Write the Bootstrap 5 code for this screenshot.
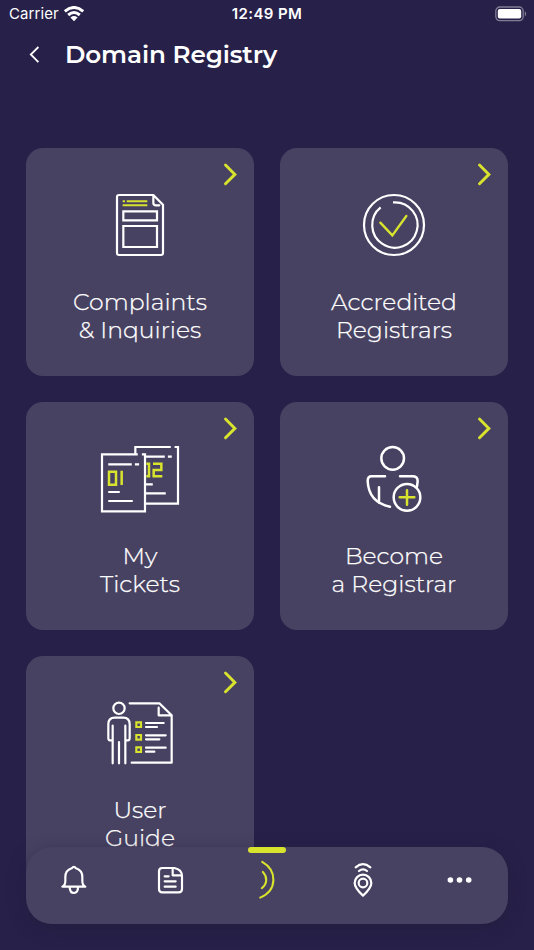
<!DOCTYPE html>
<html lang="en">
<head>
<meta charset="utf-8">
<meta name="viewport" content="width=device-width, initial-scale=1">
<title>Domain Registry</title>
<link href="https://cdn.jsdelivr.net/npm/bootstrap@5.3.0/dist/css/bootstrap.min.css" rel="stylesheet">
<style>
:root{--lime:#d8e32e;--panel:#484262}
body{background:#272049;font-family:Montserrat,Inter,sans-serif;height:950px}
svg{display:block;flex:none;fill:none}
.status-bar{height:28px;padding:0 7px 0 9px;font:15px/28px Inter,sans-serif}
.status-bar>*{flex:1 1 0}
.clock{font-weight:600;letter-spacing:.4px;padding-right:2px}
.carrier{letter-spacing:.1px}
.page-head{height:53px;padding-left:27px}
.page-head h1{font-size:24.7px;line-height:53px;font-weight:600;letter-spacing:-.1px;margin-left:23px}
.tiles{display:grid;grid-template-columns:228px 228px;gap:26px;padding:66.5px 26px 0}
.tile{height:228px;border-radius:17px;background:var(--panel);padding-top:32px;color:#fff}
.tile:hover{color:#fff}
.tile-label{margin-top:18.5px;font-size:23.5px;line-height:28px;font-weight:300;-webkit-text-stroke:.25px #fff}
.tile-label span{display:block}
.chev{position:absolute;top:14.5px;right:16px}
.w{stroke:#fff;stroke-width:6.6;stroke-linecap:round;stroke-linejoin:round}
.y{stroke:var(--lime);stroke-width:6;stroke-linejoin:miter}
.tabs{left:26px;right:26px;bottom:26.5px;height:77px;border-radius:26px;background:var(--panel);box-shadow:0 4px 16px rgba(33,27,55,.5)}
.tabs a{flex:1 1 0;height:67px}
.tab-mark{position:absolute;top:0;left:222px;width:38px;height:6px;border-radius:3px;background:var(--lime)}
.ti{stroke-width:6.5}
</style>
</head>
<body class="overflow-hidden text-white position-relative">
<div class="status-bar d-flex align-items-center">
  <div class="d-flex align-items-center carrier">Carrier
    <svg class="ms-1" width="22" height="16" viewBox="0 0 22 16"><g stroke="#fff" stroke-width="3"><path d="M1.8 5.4Q11-2.4 20.2 5.4"/><path d="M5.2 9Q11 4 16.8 9"/></g><path fill="#fff" d="M7.4 11.5Q11 8.6 14.6 11.5L11 15.2Z"/></svg>
  </div>
  <div class="clock text-center">12:49 PM</div>
  <div class="d-flex justify-content-end">
    <svg width="32" height="16" viewBox="0 0 32 16"><rect x=".8" y="1" width="27.4" height="13.6" rx="4" stroke="#817d95" stroke-width="1.3"/><rect x="2.8" y="3" width="23.4" height="9.6" rx="2" fill="#fff"/><path d="M29.8 5.2Q31.2 6 31.2 7.8T29.8 10.4Z" fill="#817d95"/></svg>
  </div>
</div>
<header class="page-head d-flex align-items-center">
  <a href="#" aria-label="Back"><svg width="15" height="20" viewBox="0 0 15 20"><path d="M11.4 2L3.8 9.5l7.6 7.6" stroke="#fff" stroke-width="1.8"/></svg></a>
  <h1 class="mb-0">Domain Registry</h1>
</header>
<main class="tiles">
  <a href="#" class="tile position-relative d-flex flex-column align-items-center text-decoration-none text-center">
    <svg class="chev" width="16" height="24" viewBox="0 0 16 24"><path d="M3.5 3L12.9 12.4 3.5 21.8" stroke="#d8e32e" stroke-width="2.9" stroke-linecap="round"/></svg>
    <svg width="100" height="90" viewBox="0 0 300 270"><path class="w" d="M87 45H190L219 74V219Q219 225 213 225H87Q81 225 81 219V51Q81 45 87 45ZM190 45V68Q190 76 198 76H208"/><path class="w" style="stroke-linejoin:miter" d="M100 94H201V121H100ZM100 138H201V201H100Z"/><path class="y" d="M98 64H105M110 64H172M98 76H172"/></svg>
    <div class="tile-label"><span>Complaints</span><span>&amp; Inquiries</span></div>
  </a>
  <a href="#" class="tile position-relative d-flex flex-column align-items-center text-decoration-none text-center">
    <svg class="chev" width="16" height="24" viewBox="0 0 16 24"><path d="M3.5 3L12.9 12.4 3.5 21.8" stroke="#d8e32e" stroke-width="2.9" stroke-linecap="round"/></svg>
    <svg width="100" height="90" viewBox="-18 90 300 270"><circle class="w" cx="132" cy="225" r="90"/><path class="w" style="stroke-linecap:butt" d="M129 157H132A68 68 0 1 1 92 172"/><path class="y" style="stroke-linecap:round;stroke-width:7" d="M91 218L127 256 169 198"/></svg>
    <div class="tile-label"><span>Accredited</span><span>Registrars</span></div>
  </a>
  <a href="#" class="tile position-relative d-flex flex-column align-items-center text-decoration-none text-center">
    <svg class="chev" width="16" height="24" viewBox="0 0 16 24"><path d="M3.5 3L12.9 12.4 3.5 21.8" stroke="#d8e32e" stroke-width="2.9" stroke-linecap="round"/></svg>
    <svg width="100" height="90" viewBox="0 -3 300 270"><path class="w" style="stroke-linecap:square;stroke-linejoin:miter" d="M136 56V36H239M257 36H264V206H168M168 65H221M237 65H242M168 148H185M168 175H224M140 58H36V229H165V58H159M58 88H122M138 88H144M58 171H86M58 198H125"/><path class="y" style="stroke-width:7.5" d="M57 110H78V149H57ZM95 107V150M169 86H177V124H169M189 86H214V105H191V124H217"/></svg>
    <div class="tile-label"><span>My</span><span>Tickets</span></div>
  </a>
  <a href="#" class="tile position-relative d-flex flex-column align-items-center text-decoration-none text-center">
    <svg class="chev" width="16" height="24" viewBox="0 0 16 24"><path d="M3.5 3L12.9 12.4 3.5 21.8" stroke="#d8e32e" stroke-width="2.9" stroke-linecap="round"/></svg>
    <svg width="100" height="90" viewBox="-18 -3 300 270"><g class="w" style="stroke-width:7.5"><circle cx="128" cy="70" r="34"/><path d="M105 124H65Q53 124 53 138Q56 202 120 215M87 157V203M150 124H187Q203 124 203 138L201 155"/><circle cx="171" cy="187" r="40"/></g><path class="y" style="stroke-width:7.5;stroke-linecap:round" d="M171 166V209M149 187H193"/></svg>
    <div class="tile-label"><span>Become</span><span>a Registrar</span></div>
  </a>
  <a href="#" class="tile position-relative d-flex flex-column align-items-center text-decoration-none text-center">
    <svg class="chev" width="16" height="24" viewBox="0 0 16 24"><path d="M3.5 3L12.9 12.4 3.5 21.8" stroke="#d8e32e" stroke-width="2.9" stroke-linecap="round"/></svg>
    <svg width="100" height="90" viewBox="0 -6 300 270"><circle class="w" cx="87" cy="55" r="17"/><path class="w" d="M68 220V107M68 151H60Q55 151 55 144V103Q55 83 74 83H100Q119 83 119 103V144Q119 151 114 151H106M106 107V220M87 156V220M119 40H208L245 76V218H125M206 53V76H241M168 99H221M168 111H201M168 136H227M168 148H208M168 173H227M168 185H193"/><path class="y" style="stroke-width:6.5" d="M139 97H153V111H139ZM139 135H153V149H139ZM139 172H153V186H139Z"/></svg>
    <div class="tile-label"><span>User</span><span>Guide</span></div>
  </a>
</main>
<nav class="tabs position-absolute d-flex">
  <span class="tab-mark"></span>
  <a href="#" class="d-flex align-items-center justify-content-center" aria-label="Notifications"><svg width="28" height="32" viewBox="120 253 84 96"><path class="w ti" d="M127 321H196Q187 317 187 304V292Q187 272 168 266Q162 257 155 266Q136 272 136 292V304Q136 317 127 321ZM149 323Q150 340 162 340T174 323"/></svg></a>
  <a href="#" class="d-flex align-items-center justify-content-center" aria-label="News"><svg width="28" height="32" viewBox="411 252 84 96"><path class="w ti" d="M427 264H463Q486 268 486 289V327Q486 337 476 337H427Q417 337 417 327V274Q417 264 427 264ZM458 265V286H484M434 289H446M434 304H467M434 320H467"/></svg></a>
  <a href="#" class="d-flex align-items-center justify-content-center" aria-label="Home"><svg width="28" height="42" viewBox="0 0 28 42"><path stroke="#d8e32e" stroke-width="2.1" stroke-linecap="round" d="M9.2 2.9C24.3 11.4 24.6 31.2 7.2 38.6M9.8 12.9C14.5 17.9 14.5 24.6 8.8 29.2"/></svg></a>
  <a href="#" class="d-flex align-items-center justify-content-center" aria-label="Coverage"><svg width="28" height="38" viewBox="268 243 84 114"><path class="w" d="M288 262Q310 243 332 262M298 273Q310 263 322 273M310 347Q285 324 285 309A25 25 0 0 1 335 309Q335 324 310 347Z"/><circle class="w" cx="310" cy="309" r="13"/></svg></a>
  <a href="#" class="d-flex align-items-center justify-content-center" aria-label="More"><svg width="28" height="12" viewBox="0 0 28 12"><g fill="#fff"><circle cx="4.4" cy="6" r="2.8"/><circle cx="13.5" cy="6" r="2.8"/><circle cx="22.7" cy="6" r="2.8"/></g></svg></a>
</nav>
<script src="https://cdn.jsdelivr.net/npm/bootstrap@5.3.0/dist/js/bootstrap.bundle.min.js"></script>
</body>
</html>
